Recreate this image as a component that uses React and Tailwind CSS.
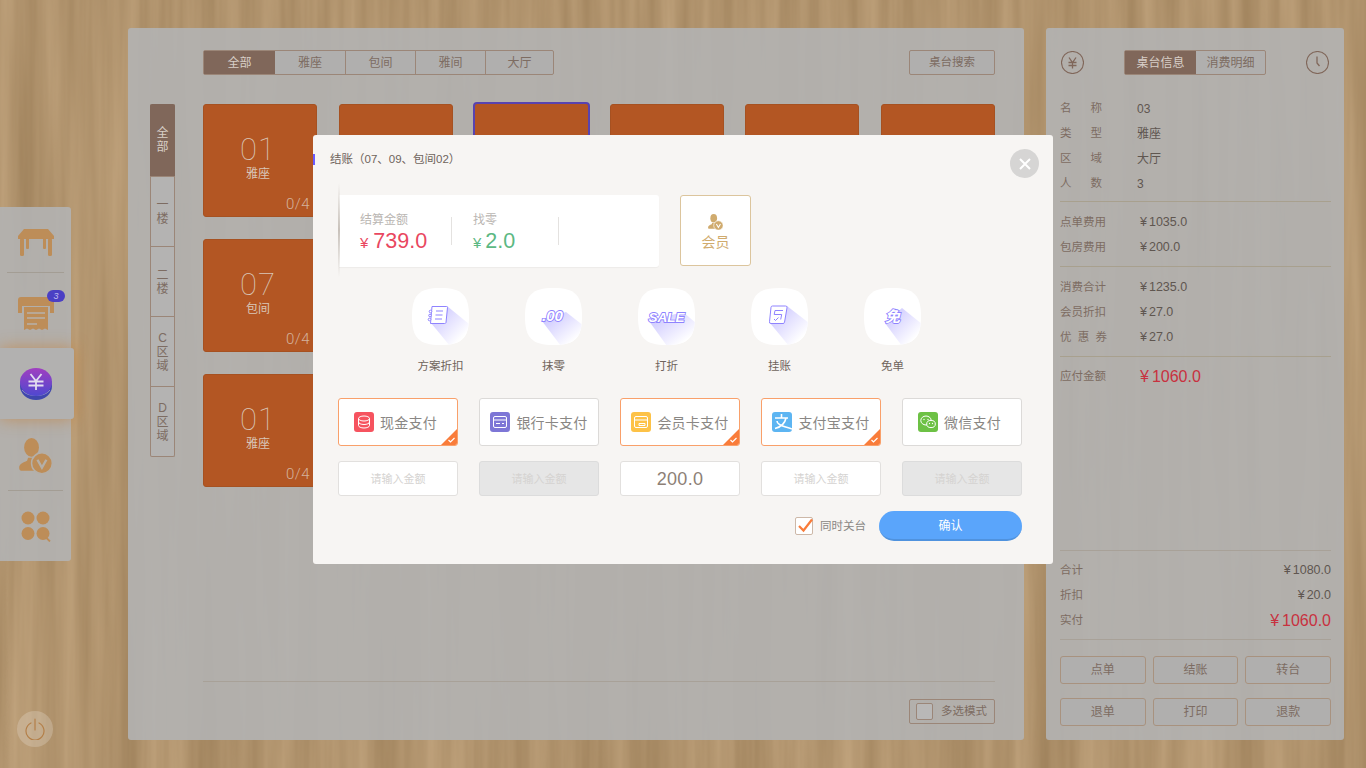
const TYPE_TABS = ["全部", "雅座", "包间", "雅间", "大厅"];
const FLOOR_TABS = [["全", "部"], ["一", "楼"], ["二", "楼"], ["C", "区", "域"], ["D", "区", "域"]];
// only the first column shows its text, the rest sits behind the dialog
const FIRST_COLUMN = { 0: ["01", "雅座"], 6: ["07", "包间"], 12: ["01", "雅座"] };
const ACTIONS = ["方案折扣", "抹零", "打折", "挂账", "免单"];
const ACTION_SHADOWS = [
  "M35 18l22 18v22H38L19 35z",
  "M41 24l18 14v20H36L17 33z",
  "M45 24l14 12v22H29L11 33z",
  "M36 18l22 17v23H38L19 35z",
  "M38 20l20 16v22H38L21 35z",
];
const PAYMENTS = [
  { name: "现金支付", color: "bg-[#f6535f]", icon: "cash", active: true, value: "", disabled: false },
  { name: "银行卡支付", color: "bg-[#7d76d6]", icon: "bank", active: false, value: "", disabled: true },
  { name: "会员卡支付", color: "bg-[#fdc247]", icon: "vip", active: true, value: "200.0", disabled: false },
  { name: "支付宝支付", color: "bg-[#5db5f2]", icon: "alipay", active: true, value: "", disabled: false },
  { name: "微信支付", color: "bg-[#6dc145]", icon: "wechat", active: false, value: "", disabled: true },
];

function WoodBackground() {
  return (
    <svg className="absolute inset-0 -z-10 w-full h-full" aria-hidden="true">
      <filter id="wood" x="0" y="0" width="100%" height="100%" colorInterpolationFilters="sRGB">
        <feTurbulence type="fractalNoise" baseFrequency="0.05 0.002" numOctaves="4" seed="11" />
        <feColorMatrix values="0.16 0 0 0 0.61  0.16 0 0 0 0.495  0.16 0 0 0 0.345  0 0 0 0 1" />
      </filter>
      <rect width="100%" height="100%" filter="url(#wood)" />
    </svg>
  );
}

function TableIcon() {
  return (
    <svg width="36" height="27" viewBox="0 0 36 27" fill="#bd8d58">
      <path d="M6 0h24l6 7v3H0V7z" />
      <rect x="2" y="9" width="4" height="18" rx="1.5" />
      <rect x="30" y="9" width="4" height="18" rx="1.5" />
      <rect x="8" y="9" width="3" height="11" rx="1" />
      <rect x="25" y="9" width="3" height="11" rx="1" />
    </svg>
  );
}

function ReceiptIcon() {
  return (
    <svg width="36" height="34" viewBox="0 0 36 34" fill="#bd8d58">
      <path d="M3 0h30a3 3 0 0 1 3 3v13h-4V9H4v7H0V3a3 3 0 0 1 3-3z" />
      <path d="M6 10h24v23l-3-1.500-3 1.500-3-1.500-3 1.500-3-1.500-3 1.500-3-1.500-3 1.500z" />
      <path d="M9 16h18M9 21h18M9 27h10" stroke="#b6b1aa" strokeWidth="1.400" fill="none" />
    </svg>
  );
}

function CoinIcon() {
  return (
    <svg width="32" height="32" viewBox="0 0 32 32">
      <defs>
        <linearGradient id="coin" x1="0" y1="0" x2="0" y2="1">
          <stop offset="0" stopColor="#a03fc0" />
          <stop offset="1" stopColor="#4f48d0" />
        </linearGradient>
      </defs>
      <ellipse cx="16" cy="18" rx="16" ry="14" fill="#3f47ad" />
      <path d="M2 22c3 4 8.500 5.500 14 5.500S27 26 30 22" stroke="#a9a6c9" strokeWidth="0.800" fill="none" />
      <ellipse cx="16" cy="14" rx="16" ry="14" fill="url(#coin)" />
      <path d="M10.500 6l5.500 7 5.500-7M8.500 13.500h15M8.500 17.500h15M16 13v9" stroke="#e2dcef" strokeWidth="1.800" fill="none" />
    </svg>
  );
}

function MemberIcon({ color = "#bd8d58", size = 33, cut = "#b4afa8" }) {
  return (
    <svg width={size} height={size * 1.08} viewBox="0 0 33 36" fill={color}>
      <ellipse cx="12.500" cy="9.500" rx="7.500" ry="9.500" />
      <path d="M0 30c0-4 4-5 8-7l1-3h7l1 3 3 2c-2 2-3 4-3 8H2c-1 0-2-1-2-3z" />
      <circle cx="23" cy="25.500" r="10.500" stroke={cut} strokeWidth="1.500" />
      <path d="M18.500 22l4.500 8 4.500-8" stroke={cut} strokeWidth="2.400" fill="none" />
    </svg>
  );
}

function MoreIcon() {
  return (
    <svg width="30" height="31" viewBox="0 0 30 31" fill="#bd8d58">
      <circle cx="7" cy="7" r="6.500" />
      <circle cx="22" cy="7" r="6.500" />
      <circle cx="7" cy="22.500" r="6.500" />
      <circle cx="22" cy="22.500" r="6.500" />
      <path d="M25 26.500l4 4" stroke="#bd8d58" strokeWidth="1.800" />
    </svg>
  );
}

function Sidebar() {
  return (
    <div className="w-[128px] shrink-0 flex flex-col pt-[207px]">
      <div className="w-[71px] h-[354px] flex flex-col bg-[#b3b3b3]/90 rounded-r-[3px]">
        <div className="h-[65px] flex items-center justify-center pt-[5px]">
          <TableIcon />
        </div>
        <div className="mx-[7px] h-px bg-[#a39d94]" />
        <div className="relative h-[75px] flex items-center justify-center pt-[6px]">
          <ReceiptIcon />
          <span className="absolute left-[47px] top-[17px] w-[18px] h-[12px] rounded-full bg-[#4b3fc4] text-[#c3bdf0] text-[9px] italic leading-[12px] text-center">3</span>
        </div>
        <div className="relative z-10 h-[71px] w-[74px] flex items-center justify-center bg-[#b2b1b0] rounded-r-[3px] shadow-[0_0_16px_rgba(196,128,56,0.65)] pr-[2px]">
          <CoinIcon />
        </div>
        <div className="h-[71px] flex items-center justify-center pt-[3px]">
          <MemberIcon />
        </div>
        <div className="mx-[8px] h-px bg-[#a39d94]" />
        <div className="h-[70px] flex items-center justify-center">
          <MoreIcon />
        </div>
      </div>
      <div className="mt-auto mb-[21px] ml-[17px] w-9 h-9 rounded-full bg-white/20 flex items-center justify-center">
        <svg width="20" height="22" viewBox="0 0 20 22" fill="none" stroke="#b47f48" strokeWidth="1.200" strokeLinecap="round">
          <path d="M10 1v11" />
          <path d="M6 5a9 9 0 1 0 8 0" />
        </svg>
      </div>
    </div>
  );
}

function TableCard({ info, selected }) {
  return (
    <div
      className={`relative h-[113px] rounded-[3px] bg-[#b35623] flex flex-col items-center pr-[4px] pt-[28px] text-[#d9c6b8] ${
        selected ? "border-2 border-[#5843b0] -mx-[1.5px] -mt-[2px] rounded-[4px]" : "border border-[#a65121]"
      }`}
    >
      {info && (
        <>
          <span className="[font-family:Roboto,sans-serif] font-thin text-[31px] leading-[34px] tracking-[1px]">{info[0]}</span>
          <span className="text-xs leading-[14px]">{info[1]}</span>
          <span className="absolute right-[6px] bottom-[3px] [font-family:Roboto,sans-serif] font-light text-[15px] leading-[18px] tracking-[0.5px] text-[#d3b29c]">0/4</span>
        </>
      )}
    </div>
  );
}

function MainPanel() {
  return (
    <div className="w-[896px] shrink-0 my-[28px] flex flex-col pt-[22px] pr-[29px] pl-[22px] pb-[16px] bg-[#b3b3b3]/90 rounded-[3px]">
      <div className="ml-[53px] flex justify-between h-[25px]">
        <div className="flex border border-[#9b8678] rounded-[2px] bg-[#b0afae]">
          {TYPE_TABS.map((tab, i) => (
            <div
              key={tab}
              className={`flex items-center justify-center text-xs ${i === 0 ? "w-[71px] bg-[#80675a] text-[#d8cfc8]" : "text-[#7d6c62]"} ${i > 1 ? "border-l border-[#9b8678]" : ""} ${
                i === 4 ? "w-[68px]" : i > 0 ? "w-[70px]" : ""
              }`}
            >
              {tab}
            </div>
          ))}
        </div>
        <div className="w-[86px] flex items-center justify-center border border-[#9b8678] rounded-[2px] bg-[#b0afae] text-[#7d6c62] text-[11.500px]">桌台搜索</div>
      </div>

      <div className="mt-[29px] flex gap-[28px]">
        <div className="w-[25px] h-[353px] shrink-0 flex flex-col border-x border-b border-[#9b8678] rounded-[2px] bg-[#b4b3b2]">
          {FLOOR_TABS.map((chars, i) => (
            <div
              key={chars.join("")}
              className={`flex-1 flex flex-col items-center justify-center text-xs leading-[14px] ${
                i === 0 ? "-mx-px bg-[#80675a] text-[#d8cfc8] flex-none h-[72px] rounded-t-[2px]" : "text-[#7d6c62] border-t border-[#9b8678]"
              }`}
            >
              {chars.map((c) => (
                <span key={c}>{c}</span>
              ))}
            </div>
          ))}
        </div>
        <div className="flex-1 grid grid-cols-6 gap-x-[21.6px] gap-y-[22px] content-start">
          {Array.from({ length: 18 }, (_, i) => (
            <TableCard key={i} info={FIRST_COLUMN[i]} selected={i === 2} />
          ))}
        </div>
      </div>

      <div className="mt-auto ml-[53px] border-t border-[#a8a198] pt-[17px] flex justify-end">
        <div className="w-[86px] h-[25px] flex items-center gap-[8px] pl-[6px] border border-[#9b8678] rounded-[2px] text-[#7d6c62] text-[11.500px]">
          <span className="w-[17px] h-[17px] border border-[#9b8678] rounded-[2px] bg-[#b9b8b7]" />
          多选模式
        </div>
      </div>
    </div>
  );
}

function Amount({ value, red }) {
  return (
    <span className={red ? "text-[#c8313f] text-[16px]" : "text-[#5f5650] text-[12.500px]"}>
      <span className={red ? "mr-[3px]" : "mr-[2px]"}>¥</span>
      {value}
    </span>
  );
}

function Row({ label, value, amount, red }) {
  const chars = label.length < 4 ? label.split("") : null;
  return (
    <div className="h-[25px] flex items-center text-xs">
      <div className="w-[77px] text-[#7d6c62] text-[11.500px]">
        {chars ? (
          <div className={`flex justify-between ${chars.length === 2 ? "w-[42px]" : "w-[47px]"}`}>
            {chars.map((c) => (
              <span key={c}>{c}</span>
            ))}
          </div>
        ) : (
          label
        )}
      </div>
      {amount ? (
        <span className="pl-[3px]">
          <Amount value={amount} red={red} />
        </span>
      ) : (
        <span className="text-[#5f5650]">{value}</span>
      )}
    </div>
  );
}

function TotalRow({ label, amount, red }) {
  return (
    <div className="h-[25px] flex items-center justify-between text-[11.500px]">
      <span className="text-[#7d6c62]">{label}</span>
      <Amount value={amount} red={red} />
    </div>
  );
}

function InfoPanel() {
  return (
    <div className="w-[298px] ml-[22px] shrink-0 my-[28px] flex flex-col pt-[22px] pl-[14px] pr-[13px] pb-[14px] bg-[#b3b3b3]/90 rounded-[3px]">
      <div className="h-[25px] flex items-center justify-between">
        <svg className="ml-px" width="23" height="23" viewBox="0 0 23 23" fill="none" stroke="#80675a" strokeWidth="1.100">
          <circle cx="11.500" cy="11.500" r="11" />
          <path d="M8 6.500l3.500 5 3.500-5M7.500 11.500h8M7.500 14.500h8M11.500 11.500v6" strokeWidth="1.300" />
        </svg>
        <div className="flex border border-[#9b8678] rounded-[2px] bg-[#b0afae] text-xs h-[25px]">
          <div className="w-[71px] flex items-center justify-center bg-[#80675a] text-[#d8cfc8]">桌台信息</div>
          <div className="w-[69px] flex items-center justify-center text-[#7d6c62]">消费明细</div>
        </div>
        <svg className="mr-[2px]" width="23" height="23" viewBox="0 0 23 23" fill="none" stroke="#80675a" strokeWidth="1.100">
          <circle cx="11.500" cy="11.500" r="11" />
          <path d="M11 5.500v6.500l2.500 3" strokeWidth="1.300" />
        </svg>
      </div>

      <div className="mt-[21px] pb-[5px] border-b border-[#a8a08e]">
        <Row label="名称" value="03" />
        <Row label="类型" value="雅座" />
        <Row label="区域" value="大厅" />
        <Row label="人数" value="3" />
      </div>
      <div className="pt-[8px] pb-[6px] border-b border-[#a8a08e]">
        <Row label="点单费用" amount="1035.0" />
        <Row label="包房费用" amount="200.0" />
      </div>
      <div className="pt-[8px] pb-[6px] border-b border-[#a8a08e]">
        <Row label="消费合计" amount="1235.0" />
        <Row label="会员折扣" amount="27.0" />
        <Row label="优惠券" amount="27.0" />
      </div>
      <div className="pt-[7px]">
        <Row label="应付金额" amount="1060.0" red />
      </div>

      <div className="mt-auto border-t border-b border-[#a8a198] pt-[7px] pb-[6px]">
        <TotalRow label="合计" amount="1080.0" />
        <TotalRow label="折扣" amount="20.0" />
        <TotalRow label="实付" amount="1060.0" red />
      </div>
      <div className="mt-[16px] grid grid-cols-3 gap-x-[7px] gap-y-[14px]">
        {["点单", "结账", "转台", "退单", "打印", "退款"].map((label) => (
          <button key={label} className="h-[28px] border border-[#a8927f] rounded-[3px] bg-[#b0afae] text-[#7d6c62] text-xs">
            {label}
          </button>
        ))}
      </div>
    </div>
  );
}

function ActionGlyph({ index }) {
  const stroke = { stroke: "#8f83ff", strokeWidth: 1, fill: "#ffffff" };
  const label = {
    fontFamily: "'Liberation Sans', 'Noto Sans CJK SC', sans-serif",
    fontWeight: 700,
    fontStyle: "italic",
    fill: "#ffffff",
    stroke: "#8f83ff",
    strokeWidth: 1.800,
    paintOrder: "stroke",
  };
  if (index === 0) {
    return (
      <g {...stroke}>
        <path d="M20 18.500h14.500a1 1 0 0 1 1 1l-1.500 15a1.500 1.500 0 0 1-1.500 1H18.500z" />
        <circle cx="18.500" cy="23.500" r="1.300" />
        <circle cx="18" cy="27.500" r="1.300" />
        <circle cx="17.500" cy="31.500" r="1.300" />
        <path d="M24 23h7M23.500 27h7M23 31h7" fill="none" />
      </g>
    );
  }
  if (index === 1) {
    return (
      <text x="17" y="33" fontSize="15" {...label}>
        .00
      </text>
    );
  }
  if (index === 2) {
    return (
      <text x="10.500" y="33.500" fontSize="13.500" {...label}>
        SALE
      </text>
    );
  }
  if (index === 3) {
    return (
      <g {...stroke}>
        <path d="M21.500 18h13a1.500 1.500 0 0 1 1.500 1.800l-2.500 14.500a1.500 1.500 0 0 1-1.500 1.200H20a1.500 1.500 0 0 1-1.500-1.800L20 19.300a1.500 1.500 0 0 1 1.500-1.300z" />
        <path d="M24 22.500h8M24 22.500l-.8 4h7.500l-1 5M23 31l1.500 1.500 3-3" fill="none" />
      </g>
    );
  }
  return (
    <text x="21" y="33.500" fontSize="15" {...label}>
      免
    </text>
  );
}

function ActionIcon({ index }) {
  const shape = "M28.500 0C50 0 57 7 57 28.500S50 57 28.500 57 0 50 0 28.500 7 0 28.500 0z";
  return (
    <svg width="57" height="57" viewBox="0 0 57 57">
      <defs>
        <linearGradient id={`fade${index}`} x1="0" y1="0" x2="0.8" y2="0.8">
          <stop offset="0" stopColor="#c4beff" />
          <stop offset="1" stopColor="#ffffff" />
        </linearGradient>
        <clipPath id={`clip${index}`}>
          <path d={shape} />
        </clipPath>
      </defs>
      <path d={shape} fill="#ffffff" />
      <path d={ACTION_SHADOWS[index]} fill={`url(#fade${index})`} clipPath={`url(#clip${index})`} />
      <ActionGlyph index={index} />
    </svg>
  );
}

function PayIcon({ type }) {
  const white = { fill: "none", stroke: "#ffffff", strokeWidth: 1 };
  if (type === "cash") {
    return (
      <svg width="14" height="14" viewBox="0 0 14 14" {...white}>
        <ellipse cx="7" cy="3.500" rx="5.500" ry="2.500" />
        <path d="M1.500 3.500v7c0 1.400 2.500 2.500 5.500 2.500s5.500-1.100 5.500-2.500v-7M1.500 7c0 1.400 2.500 2.500 5.500 2.500s5.500-1.100 5.500-2.500" />
      </svg>
    );
  }
  if (type === "bank" || type === "vip") {
    return (
      <svg width="14" height="12" viewBox="0 0 14 12" {...white}>
        <rect x="0.500" y="0.500" width="13" height="11" rx="1.500" />
        <path d="M0.500 4h13" />
        <path d={type === "bank" ? "M3 7.500h4M9 7.500h2" : "M5 7.500h6v2H5z"} />
      </svg>
    );
  }
  if (type === "alipay") {
    return (
      <svg width="20" height="20" viewBox="0 0 20 20" fill="none" stroke="#ffffff" strokeWidth="1.600">
        <path d="M3 6h13M9.500 2v4M14 6c-1 5-5 9-11 10.500" />
        <path d="M5 9c0 4 6 5 15 8" />
      </svg>
    );
  }
  return (
    <svg width="16" height="14" viewBox="0 0 16 14" fill="none" stroke="#ffffff" strokeWidth="1">
      <ellipse cx="6" cy="5.500" rx="5.200" ry="4.500" />
      <ellipse cx="11" cy="9" rx="4.300" ry="3.600" fill="#6dc145" />
      <path d="M4 4.500h.01M8 4.500h.01M9.500 8.500h.01M12.500 8.500h.01" strokeWidth="1.300" strokeLinecap="round" />
    </svg>
  );
}

function CheckoutDialog() {
  return (
    <div className="absolute left-[313px] top-[135px] w-[740px] h-[429px] bg-[#f7f5f3] rounded-[3px] pt-[17px] pr-[31px]">
      <div className="flex items-center h-[14px]">
        <span className="w-[2px] h-[11px] bg-[#6a5bff]" />
        <span className="ml-[15px] text-[#6f645c] text-[11.500px] leading-[14px]">结账（07、09、包间02）</span>
      </div>
      <button className="absolute right-[14px] top-[14px] w-[29px] h-[29px] rounded-full bg-[#d6d5d4] flex items-center justify-center">
        <svg width="12" height="12" viewBox="0 0 12 12" stroke="#ffffff" strokeWidth="2">
          <path d="M1 1l10 10M11 1L1 11" />
        </svg>
      </button>

      <div className="pl-[25px]">
        <div className="mt-[29px] flex">
          <div className="relative ml-px w-[320px] h-[72px] bg-white rounded-r-[3px] flex items-center shadow-[0_1px_1px_rgba(0,0,0,0.04)]">
            <span className="absolute -left-px -top-[12px] -bottom-[10px] w-[2px] bg-gradient-to-b from-transparent via-[#c8c1ba] to-transparent" />
            <div className="ml-[21px] w-[91px] pt-[6px]">
              <p className="text-xs leading-[16px] text-[#bab6b2]">结算金额</p>
              <p className="text-[#e9475f] text-[21.500px] leading-[26px]">
                <span className="text-[15px] mr-[5px]">¥</span>739.0
              </p>
            </div>
            <span className="w-px h-[28px] bg-[#e4e2e0]" />
            <div className="ml-[21px] w-[85px] pt-[6px]">
              <p className="text-xs leading-[16px] text-[#bab6b2]">找零</p>
              <p className="text-[#5cb883] text-[21.500px] leading-[26px]">
                <span className="text-[15px] mr-[4px]">¥</span>2.0
              </p>
            </div>
            <span className="w-px h-[28px] bg-[#e4e2e0]" />
          </div>
          <button className="ml-[21px] w-[71px] h-[71px] border border-[#dcc59d] rounded-[3px] bg-white flex flex-col items-center justify-center pt-[4px] text-[#d0ab6e] text-sm">
            <MemberIcon color="#d0ab6e" size={15} cut="#ffffff" />
            <span className="mt-[3px] leading-[18px]">会员</span>
          </button>
        </div>

        <div className="mt-[21px] ml-[46px] flex">
          {ACTIONS.map((label, i) => (
            <div key={label} className="w-[113px] flex flex-col items-center">
              <ActionIcon index={i} />
              <span className="mt-[13px] text-[11.500px] leading-[16px] text-[#6f645c]">{label}</span>
            </div>
          ))}
        </div>

        <div className="mt-[24px] grid grid-cols-5 gap-x-[21px]">
          {PAYMENTS.map((pay) => (
            <button
              key={pay.name}
              className={`relative h-[48px] bg-white rounded-[3px] border flex items-center justify-center gap-[6px] text-sm tracking-[0.25px] text-[#8a8784] overflow-hidden ${
                pay.active ? "border-[#f9a06a]" : "border-[#dcdad8]"
              } ${pay.name.length === 4 ? "pr-[5px]" : ""}`}
            >
              <span className={`w-[20px] h-[20px] rounded-[3px] flex items-center justify-center ${pay.color}`}>
                <PayIcon type={pay.icon} />
              </span>
              <span className="pt-[1px]">{pay.name}</span>
              {pay.active && (
                <svg className="absolute right-0 bottom-0" width="16" height="16" viewBox="0 0 16 16">
                  <path d="M16 0v16H0z" fill="#f97c3a" />
                  <path d="M7.500 11l2 2 4-4" stroke="#ffffff" strokeWidth="1.200" fill="none" />
                </svg>
              )}
            </button>
          ))}
        </div>

        <div className="mt-[15px] grid grid-cols-5 gap-x-[21px]">
          {PAYMENTS.map((pay) => (
            <div
              key={pay.name}
              className={`h-[35px] pt-[1px] rounded-[3px] border flex items-center justify-center ${
                pay.disabled ? "bg-[#e6e6e6] border-[#dcdcdc]" : "bg-white border-[#e2e0de]"
              } ${pay.value ? "text-[18px] tracking-[0.3px] text-[#8d7f76]" : "text-[11px] text-[#d5d3d1]"}`}
            >
              {pay.value || "请输入金额"}
            </div>
          ))}
        </div>

        <div className="mt-[15px] h-[30px] flex items-center justify-end">
          <span className="relative w-[18px] h-[18px] bg-white border border-[#cdb8a8] rounded-[2px]">
            <svg className="absolute -top-px left-0" width="18" height="18" viewBox="0 0 18 18" fill="none" stroke="#f97c3a" strokeWidth="2.200">
              <path d="M3 9l4.500 4.500L16 2.500" />
            </svg>
          </span>
          <span className="ml-[7px] pt-[2px] text-[11.500px] text-[#8a8784]">同时关台</span>
          <button className="ml-[13px] w-[143px] h-[30px] pt-[2px] rounded-full bg-[#5aa5fb] border-b-2 border-[#4f92de] text-white text-xs">确认</button>
        </div>
      </div>
    </div>
  );
}

export default function App() {
  return (
    <div className="relative isolate w-[1366px] h-[768px] overflow-hidden flex [font-family:'Liberation_Sans','Noto_Sans_CJK_SC',sans-serif]">
      <WoodBackground />
      <Sidebar />
      <MainPanel />
      <InfoPanel />
      <CheckoutDialog />
    </div>
  );
}
